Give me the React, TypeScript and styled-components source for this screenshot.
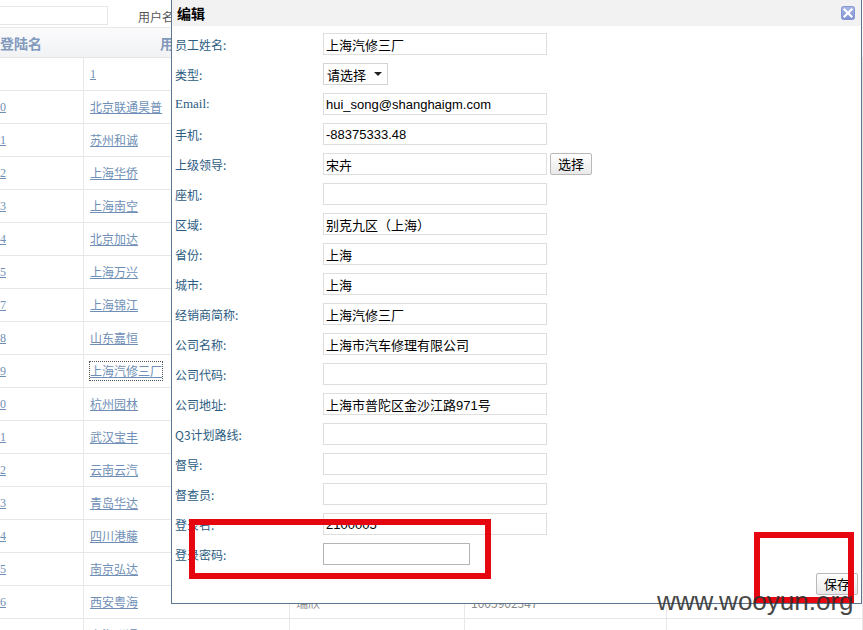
import React from "react";
import styled, { createGlobalStyle } from "styled-components";

const Global = createGlobalStyle`
  html, body { margin: 0; padding: 0; background: #fff; }
  body { font-family: "Noto Sans CJK SC", "Liberation Sans", sans-serif; }
`;

const Page = styled.div`
  position: relative;
  width: 863px;
  height: 630px;
  overflow: hidden;
  background: #fff;
`;

const SearchBar = styled.div`
  display: flex;
  align-items: flex-start;
  height: 27px;
  box-sizing: border-box;
  padding-top: 6px;
`;

const SearchInput = styled.div`
  width: 108px;
  height: 19px;
  box-sizing: border-box;
  border: 1px solid #e6e6e6;
  border-left: none;
`;

const SearchLabel = styled.span`
  margin-left: 30px;
  margin-top: 4px;
  font-size: 12px;
  line-height: 14px;
  color: #555;
`;

const Table = styled.div`
  display: grid;
  grid-template-columns: 84px 206px 175px 202px 1fr;
  border-top: 1px solid #e8e8e8;
`;

const HeadCell = styled.div<{ $pad?: number }>`
  height: 30px;
  box-sizing: border-box;
  display: flex;
  align-items: center;
  padding-left: ${(p) => p.$pad ?? 0}px;
  background: linear-gradient(#fbfbfc, #f1f2f4);
  border-bottom: 1px solid #e4e4e4;
  font-size: 14px;
  font-weight: bold;
  color: #8199bd;
`;

const Cell = styled.div<{ $pad?: number }>`
  height: 33px;
  box-sizing: border-box;
  display: flex;
  align-items: center;
  padding-left: ${(p) => p.$pad ?? 6}px;
  border-bottom: 1px solid #e6e6e6;
  border-right: 1px solid #e8e8e8;
  font-size: 12px;
  color: #8a8a8a;
`;

const Link = styled.span<{ $focus?: boolean }>`
  color: #6f8fb6;
  text-decoration: underline;
  font-size: 12px;
  font-family: "Liberation Serif", "Noto Sans CJK SC", serif;
  outline: ${(p) => (p.$focus ? "1px dotted #555" : "none")};
`;

const Dialog = styled.div`
  position: absolute;
  left: 171px;
  top: 0;
  width: 691px;
  height: 604px;
  box-sizing: border-box;
  border: 1px solid #5b7792;
  border-top: none;
  background: #fff;
  display: flex;
  flex-direction: column;
`;

const TitleBar = styled.div`
  height: 26px;
  background: #f2f2f3;
  display: flex;
  align-items: center;
  justify-content: space-between;
  padding: 0 6px 0 5px;
`;

const Title = styled.span`
  font-size: 14px;
  font-weight: bold;
  color: #000;
`;

const Form = styled.div`
  padding: 3px 0 0 3px;
  display: flex;
  flex-direction: column;
`;

const Row = styled.div`
  height: 30px;
  display: grid;
  grid-template-columns: 148px auto;
  align-items: center;
`;

const Label = styled.span<{ $latin?: boolean }>`
  font-size: ${(p) => (p.$latin ? 13 : 12)}px;
  color: #2c5c82;
  font-family: ${(p) =>
    p.$latin
      ? `"Liberation Serif", "Noto Sans CJK SC", serif`
      : `"Noto Sans CJK SC", "Liberation Sans", sans-serif`};
`;

const Field = styled.div`
  display: flex;
  align-items: center;
  gap: 3px;
`;

const TextInput = styled.input<{ $w?: number; $dark?: boolean }>`
  width: ${(p) => p.$w ?? 224}px;
  height: 22px;
  box-sizing: border-box;
  margin: 0;
  border: 1px solid ${(p) => (p.$dark ? "#b4b4b4" : "#dedede")};
  padding: 0 2px;
  font-family: "Liberation Sans", "Noto Sans CJK SC", sans-serif;
  font-size: 13px;
  color: #000;
  background: #fff;
  outline: none;
`;

const Select = styled.div`
  width: 65px;
  height: 22px;
  box-sizing: border-box;
  border: 1px solid #d4d4d4;
  display: flex;
  align-items: center;
  justify-content: space-between;
  padding: 0 5px 0 3px;
  font-size: 13px;
  color: #000;
`;

const Caret = styled.span`
  width: 0;
  height: 0;
  border-left: 4px solid transparent;
  border-right: 4px solid transparent;
  border-top: 4px solid #222;
`;

const Button = styled.button`
  height: 22px;
  padding: 0 7px;
  margin: 0;
  box-sizing: border-box;
  border: 1px solid #b9b9b9;
  border-radius: 2px;
  background: linear-gradient(#ffffff, #e9e9e9);
  font-family: "Noto Sans CJK SC", sans-serif;
  font-size: 13px;
  color: #000;
  line-height: 18px;
`;

const Footer = styled.div`
  display: flex;
  justify-content: flex-end;
  padding: 4px 3px 0 0;
`;

const RedBox = styled.div<{ $x: number; $y: number; $w: number; $h: number }>`
  position: absolute;
  left: ${(p) => p.$x}px;
  top: ${(p) => p.$y}px;
  width: ${(p) => p.$w}px;
  height: ${(p) => p.$h}px;
  box-sizing: border-box;
  border: 6px solid #e5060f;
`;

const Watermark = styled.div`
  position: absolute;
  left: 657px;
  top: 588px;
  font-family: "Liberation Sans", Arial, sans-serif;
  font-size: 26px;
  line-height: 26px;
  color: #2f2f2f;
  opacity: 0.88;
`;

const CloseIcon = () => (
  <svg width="14" height="14" viewBox="0 0 14 14">
    <defs>
      <linearGradient id="cg" x1="0" y1="0" x2="0" y2="1">
        <stop offset="0" stopColor="#a9b8e6" />
        <stop offset="1" stopColor="#7d92d2" />
      </linearGradient>
    </defs>
    <rect x="0.5" y="0.5" width="13" height="13" rx="2" fill="url(#cg)" stroke="#8396d0" />
    <path d="M3.5 3.5 L10.5 10.5 M10.5 3.5 L3.5 10.5" stroke="#fff" strokeWidth="2.2" strokeLinecap="square" />
  </svg>
);

type TRow = { a: string; b: string; c?: string; d?: string; focus?: boolean };
const rows: TRow[] = [
  { a: "", b: "1" },
  { a: "0", b: "北京联通昊普" },
  { a: "1", b: "苏州和诚" },
  { a: "2", b: "上海华侨" },
  { a: "3", b: "上海南空" },
  { a: "4", b: "北京加达" },
  { a: "5", b: "上海万兴" },
  { a: "7", b: "上海锦江" },
  { a: "8", b: "山东嘉恒" },
  { a: "9", b: "上海汽修三厂", focus: true },
  { a: "0", b: "杭州园林" },
  { a: "1", b: "武汉宝丰" },
  { a: "2", b: "云南云汽" },
  { a: "3", b: "青岛华达" },
  { a: "4", b: "四川港藤" },
  { a: "5", b: "南京弘达" },
  { a: "6", b: "西安粤海", c: "瑞欣", d: "1005902347" },
  { a: "7", b: "上海联通", c: "贾志伟", d: "" },
];

type FRow = { label: string; latin?: boolean; value?: string; kind?: "select" | "pick" | "password" };
const fields: FRow[] = [
  { label: "员工姓名:", value: "上海汽修三厂" },
  { label: "类型:", kind: "select" },
  { label: "Email:", latin: true, value: "hui_song@shanghaigm.com" },
  { label: "手机:", value: "-88375333.48" },
  { label: "上级领导:", value: "宋卉", kind: "pick" },
  { label: "座机:", value: "" },
  { label: "区域:", value: "别克九区（上海）" },
  { label: "省份:", value: "上海" },
  { label: "城市:", value: "上海" },
  { label: "经销商简称:", value: "上海汽修三厂" },
  { label: "公司名称:", value: "上海市汽车修理有限公司" },
  { label: "公司代码:", value: "" },
  { label: "公司地址:", value: "上海市普陀区金沙江路971号" },
  { label: "Q3计划路线:", value: "" },
  { label: "督导:", value: "" },
  { label: "督查员:", value: "" },
  { label: "登录名:", value: "2100005" },
  { label: "登录密码:", kind: "password" },
];

export default function App() {
  return (
    <Page>
      <Global />
      <SearchBar>
        <SearchInput />
        <SearchLabel>用户名</SearchLabel>
      </SearchBar>
      <Table>
        <HeadCell>登陆名</HeadCell>
        <HeadCell $pad={76}>用户名</HeadCell>
        <HeadCell $pad={60}>联系人</HeadCell>
        <HeadCell $pad={70}>手机</HeadCell>
        <HeadCell />
        {rows.map((r, i) => (
          <React.Fragment key={i}>
            <Cell $pad={0}>{r.a && <Link>{r.a}</Link>}</Cell>
            <Cell>
              <Link $focus={r.focus}>{r.b}</Link>
            </Cell>
            <Cell>{r.c}</Cell>
            <Cell>{r.d}</Cell>
            <Cell />
          </React.Fragment>
        ))}
      </Table>

      <Dialog>
        <TitleBar>
          <Title>编辑</Title>
          <CloseIcon />
        </TitleBar>
        <Form>
          {fields.map((f, i) => (
            <Row key={i}>
              <Label $latin={f.latin}>{f.label}</Label>
              <Field>
                {f.kind === "select" ? (
                  <Select>
                    请选择
                    <Caret />
                  </Select>
                ) : f.kind === "password" ? (
                  <TextInput type="password" $w={147} $dark readOnly value="" />
                ) : (
                  <TextInput readOnly value={f.value} />
                )}
                {f.kind === "pick" && <Button>选择</Button>}
              </Field>
            </Row>
          ))}
        </Form>
        <Footer>
          <Button>保存</Button>
        </Footer>
      </Dialog>

      <RedBox $x={189} $y={519} $w={302} $h={60} />
      <RedBox $x={754} $y={532} $w={100} $h={71} />
      <Watermark>www.wooyun.org</Watermark>
    </Page>
  );
}
